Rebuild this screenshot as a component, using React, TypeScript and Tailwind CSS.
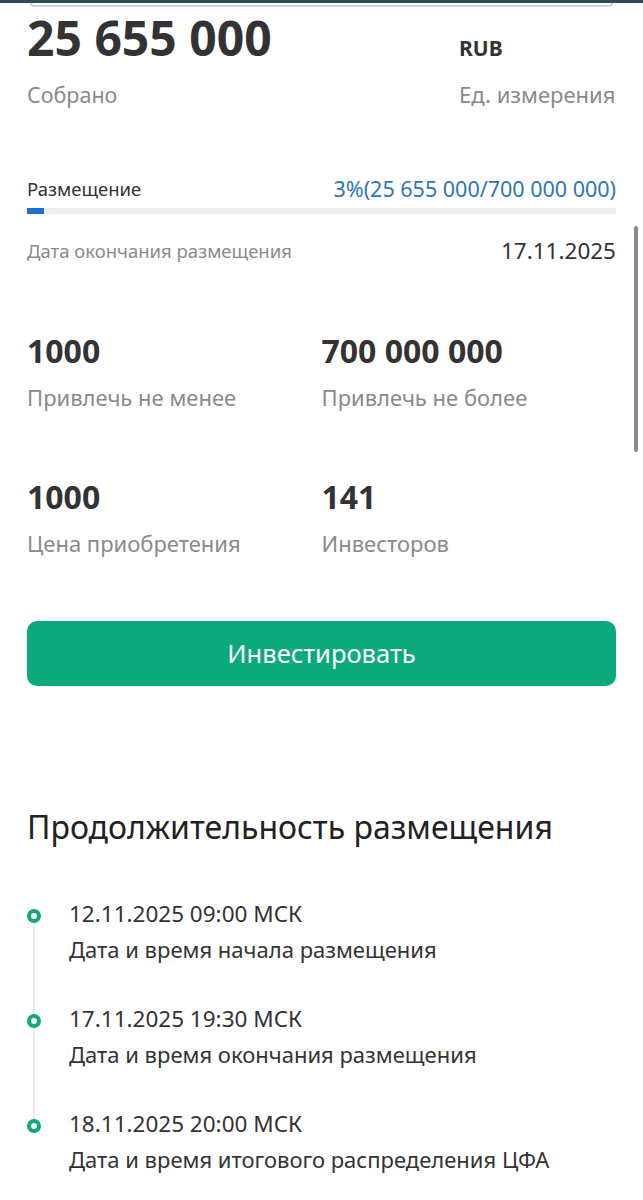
import React from "react"

const stats = [
    { value: "1000", label: "Привлечь не менее" },
    { value: "700 000 000", label: "Привлечь не более" },
    { value: "1000", label: "Цена приобретения" },
    { value: "141", label: "Инвесторов" },
]

const timeline = [
    { date: "12.11.2025 09:00 МСК", label: "Дата и время начала размещения" },
    { date: "17.11.2025 19:30 МСК", label: "Дата и время окончания размещения" },
    { date: "18.11.2025 20:00 МСК", label: "Дата и время итогового распределения ЦФА" },
]

const TimelineItem = ({ date, label, first, last }: { date: string; label: string; first: boolean; last: boolean }) => {
    return (
        <div className="flex">
            <div className="flex w-[42px] flex-col items-start">
                <div className={`ml-[6px] h-[9px] w-[2px] ${first ? "bg-transparent" : "bg-[#ececec]"}`} />
                <div className="h-[14px] w-[14px] rounded-full border-[4px] border-[#12a87c] bg-white" />
                <div className={`ml-[6px] w-[2px] flex-1 ${last ? "bg-transparent" : "bg-[#ececec]"}`} />
            </div>
            <div className={last ? "" : "pb-[42px]"}>
                <p className="text-[22.5px] leading-[28px] text-[#333]">{date}</p>
                <p className="mt-[7px] text-[22px] leading-[28px] text-[#333]">{label}</p>
            </div>
        </div>
    )
}

export default function App() {
    return (
        <div className="relative min-h-[1200px] bg-white font-['Noto_Sans',sans-serif]">
            {/* top edge of the card above */}
            <div className="h-[3px] bg-[#2f4a58]" />
            <div className="mx-[30px] h-[4px] rounded-b-xl border-x-2 border-b-2 border-[#c4d7e6]" />

            <div className="px-[27px]">
                <div className="mt-[6px] grid grid-cols-[1fr_157px] items-baseline">
                    <p className="text-[48px] font-bold leading-[50px] text-[#333]">25 655 000</p>
                    <p className="text-[21px] font-bold leading-[28px] text-[#333]">RUB</p>
                    <p className="mt-[17px] text-[21.5px] leading-[28px] text-[#8a8a8a]">Собрано</p>
                    <p className="mt-[17px] whitespace-nowrap text-[22px] leading-[28px] text-[#8a8a8a]">Ед. измерения</p>
                </div>

                <div className="mt-[67px] flex items-center justify-between">
                    <p className="text-[18.5px] leading-[26px] text-[#333]">Размещение</p>
                    <p className="text-[21.5px] leading-[26px] text-[#2e76b8]">3%(25 655 000/700 000 000)</p>
                </div>
                <div className="mt-[6px] h-[6px] bg-[#efefef]">
                    <div className="h-full w-[17px] bg-[#1f6fcf]" />
                </div>

                <div className="mt-[23px] flex items-center justify-between">
                    <p className="text-[18.5px] leading-[28px] text-[#8a8a8a]">Дата окончания размещения</p>
                    <p className="text-[22.5px] leading-[28px] text-[#333]">17.11.2025</p>
                </div>

                <div className="mt-[68px] grid grid-cols-2 gap-y-[68px]">
                    {stats.map((s) => (
                        <div key={s.label + s.value}>
                            <p className="text-[32px] font-bold leading-[36px] text-[#333]">{s.value}</p>
                            <p className="mt-[14px] text-[22px] leading-[28px] text-[#8a8a8a]">{s.label}</p>
                        </div>
                    ))}
                </div>

                <button className="mt-[64px] flex h-[65px] w-full items-center justify-center rounded-[10px] bg-[#0aaa7b] text-[25.5px] text-white">
                    Инвестировать
                </button>

                <h2 className="mt-[121px] text-[32px] leading-[40px] text-[#222]">Продолжительность размещения</h2>

                <div className="mt-[53px]">
                    {timeline.map((t, i) => (
                        <TimelineItem key={t.date} date={t.date} label={t.label} first={i === 0} last={i === timeline.length - 1} />
                    ))}
                </div>
            </div>

            {/* scroll indicator */}
            <div className="absolute left-[634px] top-[226px] h-[226px] w-[4px] rounded-full bg-[#8a8a8a]" />
        </div>
    )
}
